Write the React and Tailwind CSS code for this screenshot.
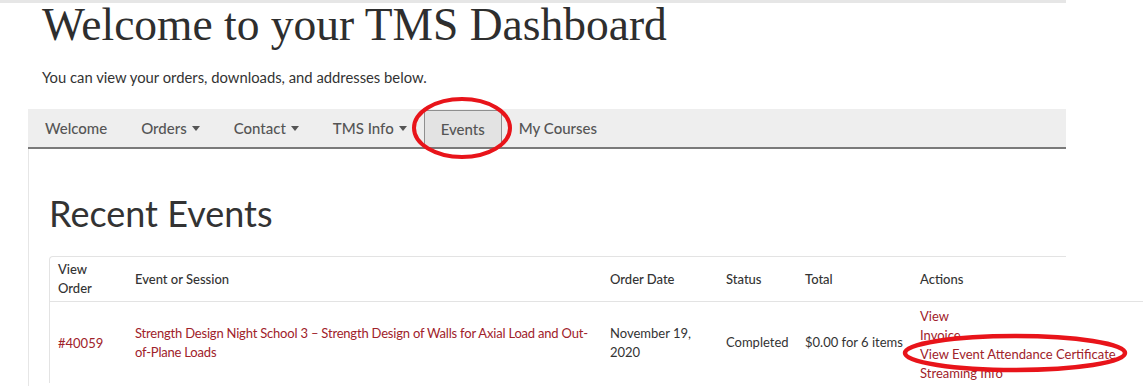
import React from 'react';

const Caret = () => (
  <svg width="8" height="5" viewBox="0 0 8 5" className="ml-[5px] inline-block">
    <path d="M0 0h8L4 5z" fill="#555" />
  </svg>
);

const NavItem = ({ label, caret, active }) => (
  <div
    className={
      active
        ? 'h-[37px] self-end px-[16px] flex items-center bg-[#e3e3e3] border-x border-t border-[#8f8f8f] text-[#555]'
        : 'h-full px-[17px] flex items-center text-[#555]'
    }
  >
    <span>{label}</span>
    {caret && <Caret />}
  </div>
);

const App = () => {
  const link = 'text-[#a0222a]';
  return (
    <div className="relative w-[1143px] h-[386px] overflow-hidden bg-white text-[#333] font-['Lato','Liberation_Sans',sans-serif]">
      <div className="h-[3px] w-[1066px] bg-[#e6e6e6]" />
      <div className="ml-[28px] w-[1038px]">
        <h1 className="pl-[14px] h-[50px] pt-[1px] text-[45.5px] leading-[42px] text-[#2e2e2e] font-['Liberation_Serif',serif]">
          Welcome to your TMS Dashboard
        </h1>
        <p className="pl-[14px] mt-[14px] text-[14.8px] leading-[20px] text-[#333]">
          You can view your orders, downloads, and addresses below.
        </p>
        <nav className="mt-[22px] h-[40px] flex items-stretch bg-[#eeeeee] border-b-2 border-[#7a7a7a] text-[15px] font-medium">
          <NavItem label="Welcome" />
          <NavItem label="Orders" caret />
          <NavItem label="Contact" caret />
          <NavItem label="TMS Info" caret />
          <NavItem label="Events" active />
          <NavItem label="My Courses" />
        </nav>
        <div className="border-l border-[#e6e6e6] pl-[20px] pt-[44px] h-[240px]">
          <h2 className="text-[36px] leading-[40px] text-[#333]">Recent Events</h2>
          <div className="mt-[23px] w-[1017px] border-t border-l border-[#e3e3e3] rounded-tl-[4px]">
            <table className="w-[1094px] table-fixed border-collapse text-[13px] leading-[19px]">
              <colgroup>
                <col className="w-[77px]" />
                <col className="w-[475px]" />
                <col className="w-[116px]" />
                <col className="w-[79px]" />
                <col className="w-[115px]" />
                <col />
              </colgroup>
              <thead>
                <tr className="border-b border-[#e3e3e3] text-left text-[#333]">
                  <th className="font-medium px-[8px] py-[3px] align-middle">View<br />Order</th>
                  <th className="font-medium px-[8px] align-middle">Event or Session</th>
                  <th className="font-medium px-[8px] align-middle">Order Date</th>
                  <th className="font-medium px-[8px] align-middle">Status</th>
                  <th className="font-medium px-[8px] align-middle">Total</th>
                  <th className="font-medium px-[8px] align-middle">Actions</th>
                </tr>
              </thead>
              <tbody>
                <tr>
                  <td className={`px-[8px] pt-[5px] pb-[4px] align-middle ${link}`}>#40059</td>
                  <td className={`pl-[8px] pr-0 align-middle tracking-[-0.2px] ${link}`}>
                    Strength Design Night School 3 – Strength Design of Walls for Axial Load and Out-of-Plane Loads
                  </td>
                  <td className="px-[8px] align-middle">November 19,<br />2020</td>
                  <td className="px-[8px] align-middle">Completed</td>
                  <td className="px-[8px] align-middle">$0.00 for 6 items</td>
                  <td className={`px-[8px] pt-[5px] align-middle ${link}`}>
                    <div>View</div>
                    <div>Invoice</div>
                    <div>View Event Attendance Certificate</div>
                    <div>Streaming Info</div>
                  </td>
                </tr>
              </tbody>
            </table>
          </div>
        </div>
      </div>
      <svg className="absolute left-0 top-0 pointer-events-none" width="1143" height="386">
        <ellipse cx="462" cy="128" rx="48" ry="29" fill="none" stroke="#e8141a" strokeWidth="4" />
        <ellipse cx="1015" cy="353" rx="110" ry="17" fill="none" stroke="#e8141a" strokeWidth="4.5" />
      </svg>
    </div>
  );
};

export default App;
